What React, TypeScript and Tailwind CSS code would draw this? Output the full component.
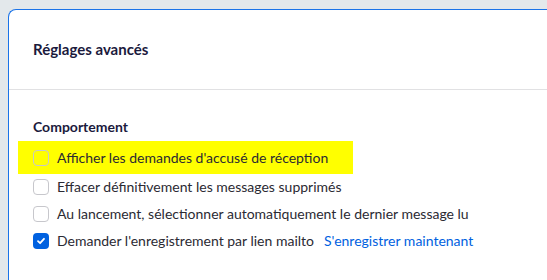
import React from "react";

const Box = ({ checked }: { checked?: boolean }) =>
  checked ? (
    <span className="flex h-4 w-4 shrink-0 items-center justify-center rounded-[4px] bg-[#0061e0]">
      <svg width="10" height="10" viewBox="0 0 10 10">
        <path d="M2 5.2 L4.1 7.2 L8 2.8" fill="none" stroke="white" strokeWidth="1.8" strokeLinecap="round" strokeLinejoin="round" />
      </svg>
    </span>
  ) : (
    <span className="block h-4 w-4 shrink-0 rounded-[4px] border border-[#c7c7cc]" />
  );

export default function App() {
  return (
    <div
      className="h-[280px] w-[547px] overflow-hidden bg-[#e3e8eb] pl-2 pt-[9px]"
      style={{ fontFamily: 'Lato, "Noto Sans", sans-serif' }}
    >
      <div className="h-full rounded-tl-[8px] border-l border-t border-[#1a73e8] bg-white">
        <div className="flex h-[80px] items-center border-b border-[#e1e1e3] pl-6">
          <h1 className="text-[15px] font-bold text-[#1b1a3d]">Réglages avancés</h1>
        </div>
        <div className="pt-[28px]">
          <h2 className="pl-6 text-[14px] font-bold leading-[18px] text-[#1b1a3d]">Comportement</h2>
          <div className="mt-[5px] flex flex-col text-[14px] text-[#2b2a33]">
            <div className="ml-[9px] flex h-[33px] w-[335px] items-center gap-[8px] bg-[#ffff00] pl-[15px]">
              <Box />
              <span>Afficher les demandes d'accusé de réception</span>
            </div>
            <div className="ml-6 mt-[2px] flex h-[21px] items-center gap-[8px]">
              <Box />
              <span>Effacer définitivement les messages supprimés</span>
            </div>
            <div className="ml-6 mt-[6px] flex h-[21px] items-center gap-[8px]">
              <Box />
              <span>Au lancement, sélectionner automatiquement le dernier message lu</span>
            </div>
            <div className="ml-6 mt-[6px] flex h-[21px] items-center gap-[8px]">
              <Box checked />
              <span>Demander l'enregistrement par lien mailto</span>
              <span className="ml-[2px] text-[#0061e0]">S'enregistrer maintenant</span>
            </div>
          </div>
        </div>
      </div>
    </div>
  );
}
